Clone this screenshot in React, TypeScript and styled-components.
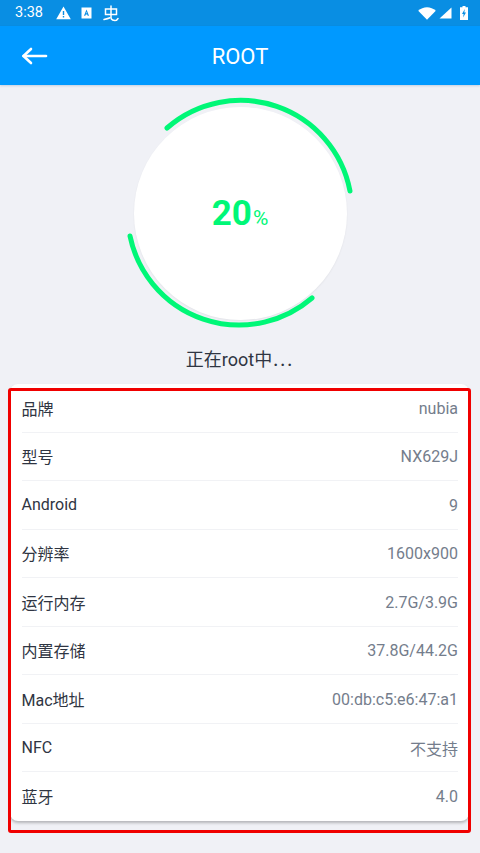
import React from "react";
import styled, { createGlobalStyle } from "styled-components";

const Global = createGlobalStyle`
  html, body { margin: 0; padding: 0; background: #f0f1f6; }
  body { font-family: Roboto, "Noto Sans CJK SC", sans-serif; }
`;
const Page = styled.div`
  width: 480px;
  height: 853px;
  overflow: hidden;
  background: #f0f1f6;
`;
const StatusBar = styled.div`
  height: 26px;
  background: #098ee3;
  display: flex;
  align-items: center;
  padding: 0 12px 0 15px;
  color: #fff;
  box-sizing: border-box;
`;
const Time = styled.span`
  font-size: 14.5px;
  width: 41px;
  line-height: 26px;
`;
const LeftIcons = styled.div`
  display: flex;
  align-items: center;
  gap: 10px;
  flex: 1;
`;
const BugIcon = styled.svg`
  margin-left: 1px;
`;
const RightIcons = styled.div`
  display: flex;
  align-items: center;
  gap: 3px;
`;
const BatteryIcon = styled.svg`
  margin-left: 5px;
`;
const Header = styled.header`
  height: 59px;
  background: #0099ff;
  display: flex;
  align-items: center;
  justify-content: center;
  position: relative;
  box-shadow: 0 1px 2px rgba(0, 60, 120, 0.18);
`;
const BackIcon = styled.svg`
  position: absolute;
  left: 21px;
  top: 20px;
`;
const Title = styled.h1`
  margin: 2px 0 0;
  font-size: 22px;
  font-weight: 400;
  color: #fff;
`;
const Hero = styled.section`
  height: 299px;
  box-sizing: border-box;
  padding-top: 12px;
  display: flex;
  flex-direction: column;
  align-items: center;
`;
const Gauge = styled.div`
  width: 232px;
  height: 232px;
  position: relative;
  display: flex;
  align-items: center;
  justify-content: center;
`;
const GaugeSvg = styled.svg`
  position: absolute;
  inset: 0;
`;
const Dial = styled.div`
  width: 213px;
  height: 213px;
  border-radius: 50%;
  background: #fff;
  box-shadow: 0 1px 2px rgba(0, 0, 0, 0.06);
`;
const Percent = styled.div`
  position: absolute;
  left: 0;
  right: 0;
  top: 97px;
  text-align: center;
  color: #00f777;
  font-size: 35px;
  font-weight: 700;
  line-height: 40px;
`;
const PercentSign = styled.span`
  font-size: 21px;
  font-weight: 400;
  margin-left: 1px;
`;
const Progress = styled.div`
  margin-top: 19px;
  font-size: 18px;
  line-height: 24px;
  color: #2f3542;
`;
const Dots = styled.span`
  letter-spacing: 2px;
  margin-left: 1px;
  font-weight: 500;
`;
const Card = styled.section`
  position: relative;
  margin: 0 11px 0 10px;
  background: #fff;
  border-radius: 8px;
  padding: 0 11px 0 11.5px;
  box-shadow: 0 2px 3px rgba(0, 0, 0, 0.25);
`;
const Highlight = styled.div`
  position: absolute;
  left: -2px;
  right: -2px;
  top: 4px;
  bottom: -12px;
  border: 3px solid #f00000;
  border-radius: 3px;
  pointer-events: none;
`;
const Row = styled.div<{ $last?: boolean }>`
  height: 48.5px;
  box-sizing: border-box;
  display: flex;
  align-items: center;
  justify-content: space-between;
  border-bottom: ${(p) => (p.$last ? "none" : "1px solid #f1f2f5")};
  font-size: 16px;
`;
const Label = styled.span`
  color: #2f3542;
`;
const Value = styled.span`
  color: #747d8c;
  font-size: 16px;
  padding-top: 1px;
`;

const rows: [string, string][] = [
  ["品牌", "nubia"],
  ["型号", "NX629J"],
  ["Android", "9"],
  ["分辨率", "1600x900"],
  ["运行内存", "2.7G/3.9G"],
  ["内置存储", "37.8G/44.2G"],
  ["Mac地址", "00:db:c5:e6:47:a1"],
  ["NFC", "不支持"],
  ["蓝牙", "4.0"],
];

export default function App() {
  return (
    <Page>
      <Global />
      <StatusBar>
        <Time>3:38</Time>
        <LeftIcons>
          <svg width="15" height="14" viewBox="0 0 15 14">
            <path fillRule="evenodd" fill="#fff" d="M7.5 0.5 L14.8 13.2 H0.2 Z M6.8 5 V9 H8.2 V5 Z M6.8 10 V11.5 H8.2 V10 Z" />
          </svg>
          <svg width="11" height="12" viewBox="0 0 11 12">
            <path fillRule="evenodd" fill="#fff" d="M0.5 0.5 H10.5 V11.5 H0.5 Z M5.5 2.5 L3 8.8 H4.3 L4.8 7.4 H6.2 L6.7 8.8 H8 Z M5.5 4.8 L5.95 6.3 H5.05 Z" />
          </svg>
          <BugIcon width="16" height="17" viewBox="0 0 16 17" fill="none" stroke="#fff" strokeWidth="1.5" strokeLinecap="round">
            <path d="M2.5 4 H13.5 V9.5 H2.5 Z" />
            <path d="M8 1 V12.5 C8 15 10.5 15.8 13.5 15.3 L15 13.5" />
            <path d="M1 14.5 C3.5 14 5.5 13.5 7 12.8" />
          </BugIcon>
        </LeftIcons>
        <RightIcons>
          <svg width="18" height="13" viewBox="0 0 18 13">
            <path fill="#fff" d="M0.2 3.8 C5 -0.9 13 -0.9 17.8 3.8 L9 12.8 Z" />
          </svg>
          <svg width="13" height="12" viewBox="0 0 13 12">
            <path fill="#fff" d="M12.5 0.5 V11.5 H0.5 Z" />
          </svg>
          <BatteryIcon width="8" height="14" viewBox="0 0 8 14">
            <path fillRule="evenodd" fill="#fff" d="M2.5 0 H5.5 V1.2 H8 V14 H0 V1.2 H2.5 Z M4.8 3 L2 8 H3.6 L3.1 11.5 L6 6.4 H4.3 Z" />
          </BatteryIcon>
        </RightIcons>
      </StatusBar>
      <Header>
        <BackIcon width="27" height="20" viewBox="0 0 27 20" fill="none" stroke="#fff" strokeWidth="2.6" strokeLinecap="round" strokeLinejoin="round">
          <path d="M2.5 10 H25" />
          <path d="M10 3 L2.5 10 L10 17" />
        </BackIcon>
        <Title>ROOT</Title>
      </Header>
      <Hero>
        <Gauge>
          <Dial />
          <GaugeSvg width="232" height="232" viewBox="0 0 232 232" fill="none" stroke="#00f777" strokeWidth="5" strokeLinecap="round">
            <path d="M43 31 A111.5 111.5 0 0 1 226 94" />
            <path d="M6 139 A111.5 111.5 0 0 0 188 201" />
          </GaugeSvg>
          <Percent>
            20<PercentSign>%</PercentSign>
          </Percent>
        </Gauge>
        <Progress>
          正在root中<Dots>...</Dots>
        </Progress>
      </Hero>
      <Card>
        <Highlight />
        {rows.map(([k, v], i) => (
          <Row key={k} $last={i === rows.length - 1}>
            <Label>{k}</Label>
            <Value>{v}</Value>
          </Row>
        ))}
      </Card>
    </Page>
  );
}
